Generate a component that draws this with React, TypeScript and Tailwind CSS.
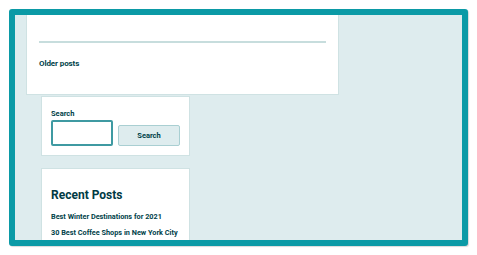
import React from "react";

export default function App() {
  const font = { fontFamily: "Roboto, 'Liberation Sans', sans-serif" };
  return (
    <div className="w-[477px] h-[255px] bg-white pt-[9px] pl-[9px]" style={font}>
      <div className="w-[459px] h-[237px] border-[6px] border-[#0b9aa6] rounded-[3px] bg-[#deecee] overflow-hidden shadow-[1px_1px_1px_rgba(0,0,0,0.15)]">
        <div className="flex flex-col">
          {/* Card 1 */}
          <div className="ml-[11px] w-[313px] h-[80px] bg-white border-x border-b border-[#cfe2e3] flex flex-col pl-[12px]">
            <div className="mt-[26px] w-[287px] h-[2px] bg-[#c7dddd]" />
            <div className="mt-[15px] text-[8px] leading-[12px] font-bold text-[#003f49] tracking-[-0.1px]">Older posts</div>
          </div>
          {/* Search widget */}
          <div className="ml-[26px] mt-[1px] w-[149px] h-[60px] bg-white border border-[#cfe2e3] flex flex-col pl-[9px]">
            <div className="mt-[12px] text-[7.5px] leading-[10px] font-bold text-[#003f49]">Search</div>
            <div className="mt-[1px] flex items-end gap-[5px]">
              <div className="w-[62px] h-[26px] border-2 border-[#3f9aa2] rounded-[2px] bg-white" />
              <div className="w-[62px] h-[21px] border border-[#a9cfd2] rounded-[2px] bg-[#deecee] flex items-center justify-center text-[7.5px] font-bold text-[#003f49]">
                Search
              </div>
            </div>
          </div>
          {/* Recent posts */}
          <div className="ml-[26px] mt-[12px] w-[149px] h-[90px] bg-white border border-[#cfe2e3] flex flex-col pl-[9px]">
            <div className="mt-[18px] text-[12px] leading-[16px] font-bold text-[#003a44]">Recent Posts</div>
            <div className="mt-[9px] text-[7.3px] leading-[10px] font-bold text-[#003f49] whitespace-nowrap">Best Winter Destinations for 2021</div>
            <div className="mt-[6px] text-[7.3px] leading-[10px] font-bold text-[#003f49] whitespace-nowrap">30 Best Coffee Shops in New York City</div>
          </div>
        </div>
      </div>
    </div>
  );
}
